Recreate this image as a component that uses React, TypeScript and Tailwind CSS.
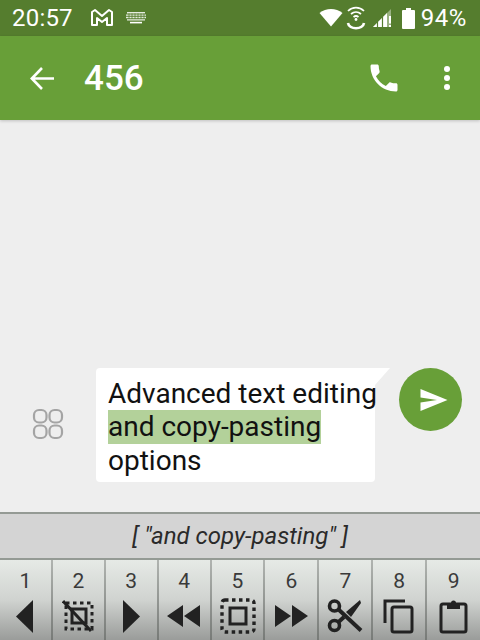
import React from "react";

function Key({ n, children, w, last }: { n: string; children: React.ReactNode; w: string; last?: boolean }) {
  return (
    <div className={`${w} h-full flex bg-gradient-to-b from-[#e6eae6] via-[#d0d3d0] to-[#9a9c9a]`}>
      <div className="flex-1 min-w-0 flex flex-col items-center">
        <div className="h-[40px] pt-[7px] text-[21px] leading-[28px] text-[#3a3a3a]">{n}</div>
        <div className="h-[40px] flex items-start justify-center">{children}</div>
      </div>
      {!last && <div className="w-[2px] h-full bg-gradient-to-b from-[#b0b4b0] to-[#777a77]" />}
    </div>
  );
}

export default function App() {
  const ink = "#222222";
  return (
    <div className="w-[480px] h-[640px] flex flex-col overflow-hidden bg-[#eeeeee] font-['Roboto',sans-serif]">
      <div className="h-[36px] bg-[#557d2e] flex items-center text-white shrink-0">
        <span className="ml-[12px] text-[24px] leading-none font-normal tracking-[0.2px]">20:57</span>
        <svg className="ml-[17px]" width="24" height="20" viewBox="0 0 24 20" fill="none" stroke="white" strokeWidth="2" strokeLinejoin="round">
          <path d="M2 4 L5 2 L12 8 L19 2 L22 4 V17 H17 V10 L12 14 L7 10 V17 H2 Z" />
        </svg>
        <svg className="ml-[12px]" width="20" height="12" viewBox="0 0 20 12" fill="white">
          <path d="M1 0h18v1.4H1zM0 2.4h20v1.4H0zM0 4.8h20v1.4H0zM1 7.2h18v1.2H1z" opacity="0.85" />
          <path d="M3 1.4V7M6 1.4V7M9 1.4V7M12 1.4V7M15 1.4V7M18 1.4V7" stroke="#557d2e" strokeWidth="0.8" />
          <rect x="4" y="9.8" width="12" height="1.6" />
        </svg>
        <div className="flex-1" />
        <svg width="24" height="20" viewBox="0 0 24 20" fill="white" className="mr-[3px]">
          <path d="M0.5 5 C7 -0.5 17 -0.5 23.5 5 L12 18.5 Z" />
        </svg>
        <svg width="20" height="24" viewBox="0 0 20 24" fill="none" stroke="white" strokeWidth="1.7" className="mr-[7px]">
          <path d="M2 5 C6.5 0.5 13.5 0.5 18 5" />
          <path d="M5 8 C8 5.3 12 5.3 15 8" />
          <path d="M7.5 11 C9 9.8 11 9.8 12.5 11" />
          <circle cx="10" cy="13.5" r="1.4" fill="white" stroke="none" />
          <path d="M2 17 C3 24 17 24 18 17" strokeWidth="2.6" />
        </svg>
        <svg width="20" height="20" viewBox="0 0 20 20" className="mr-[9px]">
          <path d="M0 19 L18 1 V19 Z" fill="white" opacity="0.4" />
          <path d="M0 19 L14 5 V19 Z" fill="white" />
          <path d="M4.5 19V14M9.5 19V9" stroke="#557d2e" strokeWidth="1.2" />
          <rect x="16" y="8" width="2" height="7.5" fill="white" />
          <rect x="16" y="17" width="2" height="2" fill="white" />
        </svg>
        <svg width="13" height="21" viewBox="0 0 13 21" fill="white" className="mr-[6px]">
          <path d="M4 0h5v2h3a1 1 0 0 1 1 1v17a1 1 0 0 1-1 1H1a1 1 0 0 1-1-1V3a1 1 0 0 1 1-1h3z" />
        </svg>
        <span className="mr-[13px] text-[24px] leading-none tracking-[0.6px]">94%</span>
      </div>

      <div className="h-[84px] bg-[#689f38] flex items-center text-white shrink-0 shadow-[0_1px_3px_rgba(0,0,0,0.2)] relative">
        <svg className="ml-[30px]" width="25" height="25" viewBox="0 0 25 25" fill="none" stroke="white" strokeWidth="2.6">
          <path d="M24 12.5H2M12 2L1.8 12.5L12 23" />
        </svg>
        <span className="ml-[29px] text-[35px] leading-none font-medium">456</span>
        <div className="flex-1" />
        <svg className="mr-[42px]" width="36" height="36" viewBox="0 0 24 24" fill="white">
          <path d="M6.62 10.79c1.44 2.83 3.76 5.14 6.59 6.59l2.2-2.2c.27-.27.67-.36 1.02-.24 1.12.37 2.33.57 3.57.57.55 0 1 .45 1 1V20c0 .55-.45 1-1 1-9.39 0-17-7.61-17-17 0-.55.45-1 1-1h3.5c.55 0 1 .45 1 1 0 1.25.2 2.45.57 3.57.11.35.03.74-.25 1.02l-2.2 2.2z" />
        </svg>
        <div className="mr-[30px] flex flex-col gap-[3px]">
          <div className="w-[6px] h-[6px] rounded-full bg-white" />
          <div className="w-[6px] h-[6px] rounded-full bg-white" />
          <div className="w-[6px] h-[6px] rounded-full bg-white" />
        </div>
      </div>

      <div className="flex-1 flex items-end pb-[30px]">
        <div className="flex items-start">
          <svg className="ml-[32px] mt-[40px]" width="32" height="32" viewBox="0 0 32 32" fill="none" stroke="#a4a4a4" strokeWidth="2.2">
            <rect x="2" y="2" width="12.5" height="12.5" rx="5" />
            <rect x="17.5" y="2" width="12.5" height="12.5" rx="5" />
            <rect x="2" y="17.5" width="12.5" height="12.5" rx="5" />
            <rect x="17.5" y="17.5" width="12.5" height="12.5" rx="5" />
          </svg>
          <div className="relative ml-[32px] w-[279px] h-[114px] bg-white rounded-[4px] rounded-tr-none pl-[12px] pt-[9px] text-[28px] leading-[33.3px] text-[#111]">
            <div className="absolute left-full top-0 w-[15px] h-[17px] bg-white [clip-path:polygon(0_0,100%_0,0_100%)]" />
            <div className="whitespace-nowrap">Advanced text editing</div>
            <div><span className="inline-block bg-[#b3d19a] whitespace-nowrap">and copy-pasting</span></div>
            <div>options</div>
          </div>
          <div className="ml-[24px] w-[63px] h-[63px] rounded-full bg-[#689f38] flex items-center justify-center">
            <svg className="ml-[6px]" width="28" height="24" viewBox="0 0 28 24" fill="white">
              <path d="M0.5 1 L27.5 12 L0.5 23 V14.5 L17 12 L0.5 9.5 Z" />
            </svg>
          </div>
        </div>
      </div>

      <div className="h-[48px] shrink-0 bg-[#d4d4d4] border-y-[2px] border-[#949a94] flex items-center justify-center text-[24px] italic text-[#2a2a2a]">
        [ "and copy-pasting" ]
      </div>

      <div className="h-[80px] shrink-0 flex">
        <Key n="1" w="w-[53px]">
          <svg width="18" height="34" viewBox="0 0 18 34" fill={ink}><path d="M17 0V33L0 16.5Z" /></svg>
        </Key>
        <Key n="2" w="w-[53px]">
          <svg width="32" height="32" viewBox="0 0 32 32" fill="none">
            <rect x="4" y="3" width="26" height="26" stroke={ink} strokeWidth="3" strokeDasharray="3.5 3.5" />
            <rect x="10" y="9" width="14" height="14" stroke={ink} strokeWidth="3" />
            <path d="M1 1L29 31" stroke={ink} strokeWidth="3" />
          </svg>
        </Key>
        <Key n="3" w="w-[53px]">
          <svg width="18" height="34" viewBox="0 0 18 34" fill={ink}><path d="M1 0V33L18 16.5Z" /></svg>
        </Key>
        <Key n="4" w="w-[53px]">
          <svg width="34" height="24" viewBox="0 0 34 24" fill={ink} className="mt-[4px]"><path d="M16 1V23L0 12ZM33 1V23L17 12Z" /></svg>
        </Key>
        <Key n="5" w="w-[54px]">
          <svg width="36" height="36" viewBox="0 0 36 36" fill="none" className="-mt-[2px]">
            <rect x="2" y="2" width="32" height="32" rx="3" stroke={ink} strokeWidth="3.4" strokeDasharray="3.5 3.5" />
            <rect x="10" y="10" width="16" height="16" stroke={ink} strokeWidth="3" />
          </svg>
        </Key>
        <Key n="6" w="w-[54px]">
          <svg width="34" height="24" viewBox="0 0 34 24" fill={ink} className="mt-[4px]"><path d="M1 1V23L17 12ZM18 1V23L34 12Z" /></svg>
        </Key>
        <Key n="7" w="w-[54px]">
          <svg width="36" height="36" viewBox="0 0 36 36" fill="none" className="-mt-[2px]">
            <circle cx="7.5" cy="8" r="5" stroke={ink} strokeWidth="3.6" />
            <circle cx="7.5" cy="27.5" r="5" stroke={ink} strokeWidth="3.6" />
            <path d="M11 11L34 32.5" stroke={ink} strokeWidth="4" />
            <path d="M11 24.5L17 19" stroke={ink} strokeWidth="4" />
            <path d="M19 14L33 2L34 5L24 19Z" fill={ink} />
          </svg>
        </Key>
        <Key n="8" w="w-[54px]">
          <svg width="32" height="36" viewBox="0 0 32 36" fill="none" className="-mt-[2px]">
            <path d="M2 25V3H22" stroke={ink} strokeWidth="3" />
            <rect x="9" y="9" width="20" height="25" rx="2" stroke={ink} strokeWidth="3" />
          </svg>
        </Key>
        <Key n="9" w="w-[53px]" last>
          <svg width="30" height="36" viewBox="0 0 30 36" fill="none" className="-mt-[2px]">
            <rect x="2" y="6" width="25" height="28" rx="2" stroke={ink} strokeWidth="3" />
            <path d="M8 11V5H12a2.5 2.5 0 0 1 5 0H21V11Z" fill={ink} />
          </svg>
        </Key>
      </div>
    </div>
  );
}
